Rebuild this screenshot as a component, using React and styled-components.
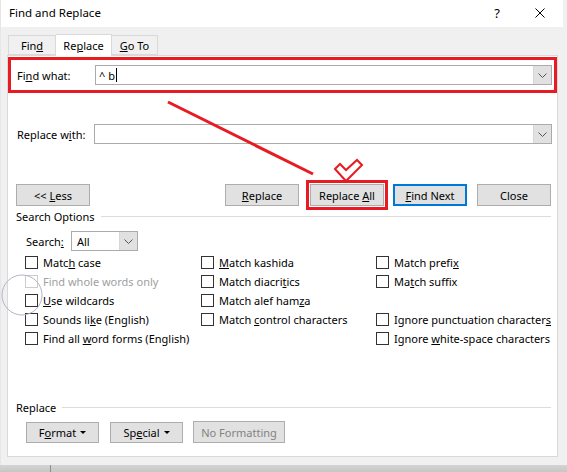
import React from 'react';
import styled, { createGlobalStyle } from 'styled-components';

const GlobalStyle = createGlobalStyle`
  html, body {
    margin: 0;
    padding: 0;
    background: #f0f0f0;
  }
  body {
    font-family: "Segoe UI", "Noto Sans", sans-serif;
    font-size: 11px;
    color: #000;
  }
`;

const Screen = styled.div`
  width: 567px;
  height: 472px;
  position: relative;
  overflow: hidden;
  background: #f0f0f0;
`;

const Window = styled.div`
  width: 563px;
  height: 465px;
  display: flex;
  flex-direction: column;
  background: #f0f0f0;
  border-left: 1px solid #e6e6e6;
  box-sizing: border-box;
`;

const TitleBar = styled.div`
  height: 27px;
  flex: none;
  background: #fff;
  display: flex;
  align-items: center;
  padding-left: 8px;
`;

const TitleText = styled.div`
  flex: 1;
  font-size: 11.5px;
  margin-top: -2px;
`;

const TitleButton = styled.div`
  width: ${p => p.$w || 40}px;
  display: flex;
  justify-content: center;
  align-items: center;
  font-size: 13px;
  margin-top: -2px;
`;

const Body = styled.div`
  flex: 1;
  display: flex;
  flex-direction: column;
  padding: 7px 4px 0 6px;
`;

const Tabs = styled.div`
  display: flex;
  align-items: flex-end;
  height: 21px;
  padding-left: 1px;
  position: relative;
  z-index: 1;
`;

const Tab = styled.div`
  box-sizing: border-box;
  width: ${p => p.$w}px;
  height: ${p => (p.$active ? 22 : 20)}px;
  margin-bottom: ${p => (p.$active ? -1 : 0)}px;
  background: ${p => (p.$active ? '#fff' : '#f0f0f0')};
  border: 1px solid #d9d9d9;
  border-bottom: ${p => (p.$active ? 'none' : '1px solid #d9d9d9')};
  border-left: ${p => (p.$noLeft ? 'none' : '1px solid #d9d9d9')};
  display: flex;
  justify-content: center;
  align-items: center;
  padding-top: ${p => (p.$active ? 0 : 1)}px;
`;

const Panel = styled.div`
  box-sizing: border-box;
  width: 551px;
  height: 402px;
  background: #fff;
  border: 1px solid #d9d9d9;
  display: flex;
  flex-direction: column;
`;

const FieldRow = styled.div`
  display: flex;
  align-items: center;
  box-sizing: border-box;
  height: ${p => (p.$highlight ? 36 : 20)}px;
  margin-top: ${p => p.$mt}px;
  padding: 0 ${p => (p.$highlight ? 2 : 5)}px 0 ${p => (p.$highlight ? 6 : 9)}px;
  border: ${p => (p.$highlight ? '3px solid #e81a22' : 'none')};
`;

const FieldLabel = styled.div`
  width: ${p => p.$w}px;
  flex: none;
`;

const ComboBox = styled.div`
  flex: ${p => (p.$w ? 'none' : 1)};
  width: ${p => (p.$w ? `${p.$w}px` : 'auto')};
  height: 20px;
  box-sizing: border-box;
  border: 1px solid #ababab;
  display: flex;
  align-items: stretch;
`;

const ComboText = styled.div`
  flex: 1;
  display: flex;
  align-items: center;
  padding-left: ${p => p.$pl || 4}px;
`;

const Caret = styled.span`
  display: inline-block;
  width: 1px;
  height: 14px;
  background: #000;
  margin-left: 1px;
`;

const DropButton = styled.div`
  width: 17px;
  flex: none;
  background: #e1e1e1;
  border-left: 1px solid #d6d6d6;
  display: flex;
  align-items: center;
  justify-content: center;
`;

const ButtonRow = styled.div`
  display: flex;
  align-items: center;
  margin-top: ${p => p.$mt}px;
  padding: 0 ${p => p.$pr || 0}px 0 ${p => p.$pl}px;
`;

const Spacer = styled.div`
  flex: 1;
`;

const Button = styled.div`
  box-sizing: border-box;
  width: ${p => p.$w || 74}px;
  height: ${p => p.$h || 22}px;
  margin-left: ${p => p.$ml || 0}px;
  background: #e1e1e1;
  border: ${p => (p.$default ? '2px solid #0078d7' : '1px solid #adadad')};
  color: ${p => (p.$disabled ? '#838383' : '#000')};
  display: flex;
  align-items: center;
  justify-content: center;
  outline: ${p => (p.$marked ? '3px solid #e81a22' : 'none')};
  outline-offset: 1px;
  gap: 4px;
  white-space: pre;
`;

const SmallArrow = styled.span`
  width: 0;
  height: 0;
  border-left: 3px solid transparent;
  border-right: 3px solid transparent;
  border-top: 3px solid #000;
  margin-top: 1px;
`;

const SectionHead = styled.div`
  display: flex;
  align-items: center;
  margin-top: ${p => p.$mt}px;
  padding: 0 6px 0 8px;
  height: 14px;
`;

const SectionLine = styled.div`
  flex: 1;
  height: 1px;
  background: #dcdcdc;
  margin-left: 6px;
`;

const SearchRow = styled.div`
  display: flex;
  align-items: center;
  margin-top: 8px;
  padding-left: 18px;
`;

const OptionGrid = styled.div`
  display: grid;
  grid-template-columns: 176px 175px 1fr;
  grid-auto-rows: 19px;
  margin-top: 2px;
  padding-left: 17px;
`;

const Option = styled.div`
  display: flex;
  align-items: center;
  color: ${p => (p.$disabled ? '#a0a0a0' : '#000')};
  white-space: nowrap;
`;

const Box = styled.span`
  width: 13px;
  height: 13px;
  box-sizing: border-box;
  border: 1px solid ${p => (p.$disabled ? '#cccccc' : '#333')};
  background: #fff;
  margin-right: 5px;
  flex: none;
`;

const Overlay = styled.svg`
  position: absolute;
  left: 0;
  top: 0;
  pointer-events: none;
`;

const Backdrop = styled.div`
  height: 7px;
  background: linear-gradient(#d4d4d4, #c6c6c6);
  position: relative;
  &::after {
    content: '';
    position: absolute;
    left: 50px;
    top: 0;
    width: 1px;
    height: 7px;
    background: #8f8f8f;
  }
`;

const Chevron = () => (
  <svg width="9" height="5" viewBox="0 0 9 5">
    <polyline points="0.5,0.5 4.5,4.5 8.5,0.5" fill="none" stroke="#555" strokeWidth="1" />
  </svg>
);

const options = [
  ['Matc', 'h', ' case'], ['', 'M', 'atch kashida'], ['Match prefi', 'x', ''],
  ['Find whole words only', '', '', true], ['Match diacri', 't', 'ics'], ['Ma', 't', 'ch suffix'],
  ['', 'U', 'se wildcards'], ['Match alef ham', 'z', 'a'], null,
  ['Sounds li', 'k', 'e (English)'], ['Match ', 'c', 'ontrol characters'], ['Ignore punctuation character', 's', ''],
  ['Find all ', 'w', 'ord forms (English)'], null, ['Ignore ', 'w', 'hite-space characters'],
];

export default function App() {
  return (
    <Screen>
      <GlobalStyle />
      <Window>
        <TitleBar>
          <TitleText>Find and Replace</TitleText>
          <TitleButton>?</TitleButton>
          <TitleButton $w={46}>
            <svg width="10" height="10" viewBox="0 0 10 10">
              <path d="M0.5 0.5 L9.5 9.5 M9.5 0.5 L0.5 9.5" stroke="#000" strokeWidth="1" />
            </svg>
          </TitleButton>
        </TitleBar>
        <Body>
          <Tabs>
            <Tab $w={48}><span>Fin<u>d</u></span></Tab>
            <Tab $w={56} $active $noLeft><span>Re<u>p</u>lace</span></Tab>
            <Tab $w={46} $noLeft><span><u>G</u>o To</span></Tab>
          </Tabs>
          <Panel>
            <FieldRow $highlight $mt={1}>
              <FieldLabel $w={78}>Fi<u>n</u>d what:</FieldLabel>
              <ComboBox>
                <ComboText $pl={3}>^ b<Caret /></ComboText>
                <DropButton><Chevron /></DropButton>
              </ComboBox>
            </FieldRow>
            <FieldRow $mt={31}>
              <FieldLabel $w={77}>Replace w<u>i</u>th:</FieldLabel>
              <ComboBox>
                <ComboText />
                <DropButton><Chevron /></DropButton>
              </ComboBox>
            </FieldRow>
            <ButtonRow $mt={40} $pl={8} $pr={6}>
              <Button><span>&lt;&lt; <u>L</u>ess</span></Button>
              <Spacer />
              <Button><span><u>R</u>eplace</span></Button>
              <Button $ml={11} $marked><span>Replace <u>A</u>ll</span></Button>
              <Button $ml={9} $default><span><u>F</u>ind Next</span></Button>
              <Button $ml={10}>Close</Button>
            </ButtonRow>
            <SectionHead $mt={3}>
              Search Options
              <SectionLine />
            </SectionHead>
            <SearchRow>
              <FieldLabel $w={45}>Search<u>:</u></FieldLabel>
              <ComboBox $w={67}>
                <ComboText $pl={5}>All</ComboText>
                <DropButton><Chevron /></DropButton>
              </ComboBox>
            </SearchRow>
            <OptionGrid>
              {options.map((o, i) =>
                o ? (
                  <Option key={i} $disabled={o[3]}>
                    <Box $disabled={o[3]} />
                    <span>{o[0]}{o[1] && <u>{o[1]}</u>}{o[2]}</span>
                  </Option>
                ) : (
                  <div key={i} />
                )
              )}
            </OptionGrid>
            <SectionHead $mt={52}>
              Replace
              <SectionLine />
            </SectionHead>
            <ButtonRow $mt={7} $pl={18}>
              <Button $w={73} $h={21}><span>F<u>o</u>rmat</span><SmallArrow /></Button>
              <Button $w={73} $h={21} $ml={11}><span>Sp<u>e</u>cial</span><SmallArrow /></Button>
              <Button $w={92} $h={22} $ml={10} $disabled>No Formatting</Button>
            </ButtonRow>
          </Panel>
        </Body>
      </Window>
      <Backdrop />
      <Overlay width="567" height="472">
        <line x1="168" y1="102" x2="313" y2="174" stroke="#e81a22" strokeWidth="3" />
        <path
          d="M335 169 L340 164 L346 170 L357 160 L362 165 L346 181 Z"
          fill="#fff"
          stroke="#e81a22"
          strokeWidth="2"
          strokeLinejoin="miter"
        />
        <circle cx="22" cy="295" r="20" fill="none" stroke="#b4b4c8" strokeWidth="1" />
      </Overlay>
    </Screen>
  );
}
